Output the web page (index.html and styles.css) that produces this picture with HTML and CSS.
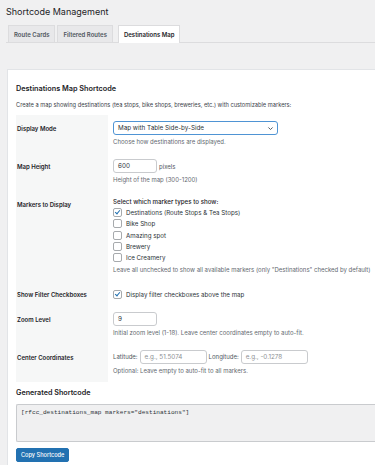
FILE: index.html
```html
<!DOCTYPE html>
<html lang="en">
<head>
    <meta charset="UTF-8">
    <meta name="viewport" content="width=device-width, initial-scale=1.0">
    <title>Shortcode Management</title>
    <link rel="stylesheet" href="styles.css">
</head>
<body>

    <div class="wrap">
        <h1 class="page-title">Shortcode Management</h1>

        <nav class="tabs">
            <a class="tab">Route Cards</a>
            <a class="tab">Filtered Routes</a>
            <a class="tab active">Destinations Map</a>
        </nav>

        <div class="card">
            <h2 class="card-title">Destinations Map Shortcode</h2>
            <p class="intro">Create a map showing destinations (tea stops, bike shops, breweries, etc.) with customizable markers:</p>

            <table class="form-table">
                <tr>
                    <th>Display Mode</th>
                    <td>
                        <div class="select">
                            <span>Map with Table Side-by-Side</span>
                            <svg class="chevron" viewBox="0 0 10 10" width="7" height="7"><path d="M2 3.5 L5 6.5 L8 3.5" fill="none" stroke="#50575e" stroke-width="1.4"/></svg>
                        </div>
                        <p class="help">Choose how destinations are displayed.</p>
                    </td>
                </tr>
                <tr>
                    <th>Map Height</th>
                    <td>
                        <div class="inline">
                            <span class="input small">600</span>
                            <span class="unit">pixels</span>
                        </div>
                        <p class="help">Height of the map (300-1200)</p>
                    </td>
                </tr>
                <tr>
                    <th>Markers to Display</th>
                    <td>
                        <p class="lead">Select which marker types to show:</p>
                        <label class="check"><span class="box checked"></span>Destinations (Route Stops &amp; Tea Stops)</label>
                        <label class="check"><span class="box"></span>Bike Shop</label>
                        <label class="check"><span class="box"></span>Amazing spot</label>
                        <label class="check"><span class="box"></span>Brewery</label>
                        <label class="check"><span class="box"></span>Ice Creamery</label>
                        <p class="help">Leave all unchecked to show all available markers (only "Destinations" checked by default)</p>
                    </td>
                </tr>
                <tr class="tight">
                    <th>Show Filter Checkboxes</th>
                    <td>
                        <label class="check"><span class="box checked"></span>Display filter checkboxes above the map</label>
                    </td>
                </tr>
                <tr>
                    <th>Zoom Level</th>
                    <td>
                        <span class="input small">9</span>
                        <p class="help">Initial zoom level (1-18). Leave center coordinates empty to auto-fit.</p>
                    </td>
                </tr>
                <tr>
                    <th>Center Coordinates</th>
                    <td>
                        <div class="inline">
                            <span class="unit">Latitude:</span>
                            <span class="input coord placeholder">e.g., 51.5074</span>
                            <span class="unit">Longitude:</span>
                            <span class="input coord placeholder">e.g., -0.1278</span>
                        </div>
                        <p class="help">Optional: Leave empty to auto-fit to all markers.</p>
                    </td>
                </tr>
            </table>

            <h3 class="sub-title">Generated Shortcode</h3>
            <div class="code">[rfcc_destinations_map markers="destinations"]</div>

            <button class="button">Copy Shortcode</button>
        </div>
    </div>

</body>
</html>
```

FILE: styles.css
```css
/* Admin page base */
body {
    margin: 0;
    background: #f0f0f1;
    color: #1d2327;
    font-family: Inter, "Noto Sans", sans-serif;
    font-size: 6.5px;
    overflow: hidden;
}

.wrap {
    padding-left: 6px;
}

.page-title {
    margin: 0;
    padding-top: 5px;
    font-size: 9px;
    font-weight: 400;
    line-height: 14px;
    color: #1d2327;
}

/* Tabs */
.tabs {
    display: flex;
    gap: 2px;
    margin-top: 6px;
    padding-left: 2px;
    border-bottom: 1px solid #dcdcde;
    height: 17px;
}

.tab {
    display: flex;
    align-items: center;
    padding: 0 5px;
    background: #e8e8ea;
    border: 1px solid #dcdcde;
    border-bottom: none;
    font-size: 6px;
    font-weight: 600;
    color: #50575e;
}

.tab.active {
    background: #fff;
    color: #1d2327;
    margin-left: 3px;
    margin-bottom: -1px;
}

/* Card */
.card {
    margin-top: 26px;
    margin-left: 1px;
    width: 370px;
    background: #fff;
    border: 1px solid #e2e4e7;
    border-right: none;
    padding: 12px 0 20px 8px;
}

.card-title {
    margin: 0;
    font-size: 7.3px;
    font-weight: 600;
    line-height: 14px;
}

.intro {
    margin: 4px 0 6px;
    font-size: 5.7px;
    line-height: 9px;
    color: #3c434a;
}

/* Settings table */
.form-table {
    border-collapse: collapse;
}

.form-table th {
    width: 90px;
    padding: 9px 1px 0 1px;
    background: #f6f7f7;
    text-align: left;
    vertical-align: top;
    font-size: 6px;
    font-weight: 600;
    line-height: 9px;
}

.form-table td {
    padding: 6px 0 7px 5px;
    vertical-align: top;
}

.form-table tr.tight td {
    padding-top: 8px;
    padding-bottom: 5px;
}

.help {
    margin: 2px 0 0;
    font-size: 6px;
    line-height: 9px;
    color: #646970;
}

.lead {
    margin: 0 0 1px;
    font-size: 6.2px;
    font-weight: 500;
    line-height: 9px;
}

.select {
    display: flex;
    align-items: center;
    justify-content: space-between;
    width: 156px;
    height: 12px;
    padding: 0 3px 0 4px;
    border: 1px solid #4f94d4;
    border-radius: 3px;
    font-size: 6.3px;
    color: #2c3338;
}

.inline {
    display: flex;
    align-items: center;
    gap: 2px;
}

.input {
    display: inline-flex;
    align-items: center;
    box-sizing: border-box;
    height: 14px;
    padding: 0 4px;
    border: 1px solid #c9cbce;
    border-radius: 3px;
    font-size: 6.3px;
    color: #2c3338;
}

.input.small {
    width: 44px;
}

.input.coord {
    width: 67px;
}

.placeholder {
    color: #8c8f94;
}

.unit {
    font-size: 6px;
    color: #50575e;
}

.check {
    display: flex;
    align-items: center;
    gap: 4px;
    height: 11.25px;
    font-size: 6.2px;
    color: #2c3338;
}

.box {
    position: relative;
    width: 7px;
    height: 7px;
    border: 1px solid #a7aaad;
    border-radius: 2px;
    background: #fff;
}

.box.checked::after {
    content: "";
    position: absolute;
    left: 2px;
    top: 0;
    width: 2px;
    height: 4px;
    border: solid #2271b1;
    border-width: 0 1px 1px 0;
    transform: rotate(40deg);
}

/* Shortcode output */
.sub-title {
    margin: 5px 0 0;
    font-size: 7.2px;
    font-weight: 600;
    line-height: 12px;
}

.code {
    margin-top: 5px;
    height: 30px;
    padding: 3px 4px;
    background: #f0f0f1;
    border: 1px solid #c9cbce;
    border-right: none;
    border-radius: 2px 0 0 2px;
    font-family: "Liberation Mono", monospace;
    font-size: 6.1px;
    line-height: 9px;
    color: #2c3338;
}

.button {
    margin-top: 6px;
    height: 14px;
    padding: 0 4px;
    background: #2271b1;
    border: 1px solid #2271b1;
    border-radius: 2px;
    color: #fff;
    font-family: Inter, "Noto Sans", sans-serif;
    font-size: 5.6px;
    font-weight: 500;
}
```
